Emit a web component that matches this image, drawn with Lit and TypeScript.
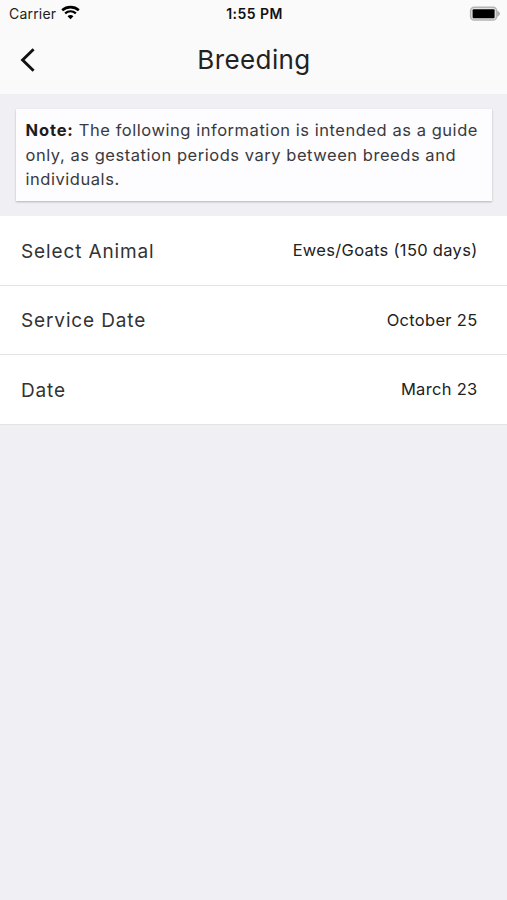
import { LitElement, html, css } from "lit";
import { customElement, property } from "lit/decorators.js";

@customElement("status-bar")
class StatusBar extends LitElement {
  static styles = css`
    :host {
      display: grid;
      grid-template-columns: 1fr auto 1fr;
      align-items: center;
      height: 27px;
      padding: 0 7px 0 9px;
      box-sizing: border-box;
      font-size: 14px;
      color: #222;
    }
    .left {
      display: flex;
      align-items: center;
      gap: 5px;
      letter-spacing: 0.2px;
    }
    .time {
      font-weight: 600;
      font-size: 14px;
      letter-spacing: 0.45px;
      color: #111;
    }
    .battery {
      justify-self: end;
      display: block;
    }
    .wifi {
      display: block;
      margin-top: -2px;
    }
  `;
  render() {
    return html`
      <div class="left">
        <span>Carrier</span>
        <svg class="wifi" width="19" height="15" viewBox="0 0 18 14">
          <path d="M1.1 4.9C5.6 .9 12.4 .9 16.9 4.9" fill="none" stroke="#000" stroke-width="2.4" />
          <path d="M3.9 7.9C6.9 5.3 11.1 5.3 14.1 7.9" fill="none" stroke="#000" stroke-width="2.2" />
          <path d="M6.2 10.6C7.8 9.1 10.2 9.1 11.8 10.6L9 13.5Z" fill="#000" />
        </svg>
      </div>
      <span class="time">1:55 PM</span>
      <svg class="battery" width="31" height="16" viewBox="0 0 31 16">
        <rect x="1.6" y="1.3" width="26" height="12.8" rx="3.6" fill="#e4e4e4" stroke="#b4b4b4" stroke-width="1.5" />
        <rect x="3.6" y="3.2" width="22" height="9" rx="1" fill="#000" />
        <path d="M28.2 4.5Q31 6.1 31 7.7T28.2 10.9Z" fill="#adadad" />
      </svg>
    `;
  }
}

@customElement("detail-row")
class DetailRow extends LitElement {
  @property() label = "";
  @property() value = "";
  static styles = css`
    :host {
      display: flex;
      align-items: center;
      justify-content: space-between;
      height: 69.5px;
      box-sizing: border-box;
      padding: 0 29.5px 0 21px;
      background: #fff;
      border-bottom: 1px solid #e4e4e6;
    }
    .label {
      padding-top: 2px;
      font-size: 19px;
      letter-spacing: 0.87px;
      color: #333;
    }
    .value {
      font-size: 16.5px;
      letter-spacing: 0.3px;
      color: #222;
    }
  `;
  render() {
    return html`<span class="label">${this.label}</span><span class="value">${this.value}</span>`;
  }
}

@customElement("app-root")
class AppRoot extends LitElement {
  static styles = css`
    :host {
      display: block;
      height: 900px;
      overflow: hidden;
      background: #efeff4;
      font-family: Inter, "Liberation Sans", sans-serif;
    }
    .header {
      height: 94px;
      background: #fafafa;
    }
    .nav {
      display: grid;
      grid-template-columns: 51px 1fr 50px;
      align-items: center;
      height: 66px;
    }
    .back {
      display: block;
      margin-left: 20px;
    }
    .title {
      margin: 0;
      padding-bottom: 2px;
      text-align: center;
      font-size: 26px;
      font-weight: 400;
      letter-spacing: 0.4px;
      color: #222;
    }
    .note {
      margin: 15px 15px 15px 16px;
      height: 92px;
      box-sizing: border-box;
      padding: 9.4px 0 0 9.5px;
      background: #fdfcff;
      box-shadow: 0 1px 2px rgba(0, 0, 0, 0.25);
      font-size: 16.5px;
      line-height: 24.5px;
      letter-spacing: 0.54px;
      white-space: nowrap;
      color: #3a3a3c;
    }
    .note b {
      font-weight: 700;
      letter-spacing: 0.85px;
      color: #1c1c1e;
    }
  `;
  private rows = [
    { label: "Select Animal", value: "Ewes/Goats (150 days)" },
    { label: "Service Date", value: "October 25" },
    { label: "Date", value: "March 23" },
  ];
  render() {
    return html`
      <header class="header">
        <status-bar></status-bar>
        <div class="nav">
          <svg class="back" width="17" height="26" viewBox="0 0 17 26">
            <path d="M13.6 2.2L2.6 13L13.6 23.8" fill="none" stroke="#111" stroke-width="2.9" />
          </svg>
          <h1 class="title">Breeding</h1>
        </div>
      </header>
      <div class="note">
        <b>Note:</b> The following information is intended as a guide<br />only, as gestation periods vary between
        breeds and<br />individuals.
      </div>
      ${this.rows.map((r) => html`<detail-row label=${r.label} value=${r.value}></detail-row>`)}
    `;
  }
}
